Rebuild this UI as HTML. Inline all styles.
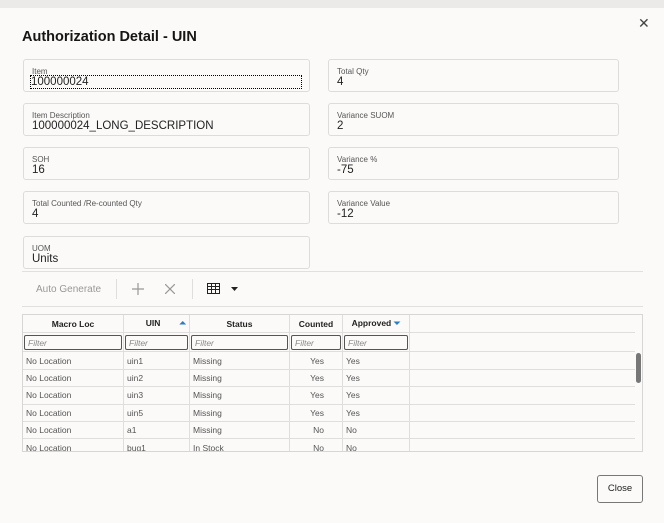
<!DOCTYPE html><html><head><style>
body{margin:0;width:664px;height:523px;background:#fbfaf9;font-family:"Liberation Sans",sans-serif;position:relative;overflow:hidden}
.top{position:absolute;left:0;top:0;width:664px;height:8px;background:#eceae8}
h1{position:absolute;left:22px;top:29px;margin:0;font-size:14.5px;font-weight:bold;color:#161513}
.x{position:absolute;left:638px;top:15px;font-size:14px;color:#444;font-weight:300}
.f{position:absolute;width:287px;height:33px;border:1px solid #dedcda;border-radius:3px;background:#fbfaf9;box-sizing:border-box}
.f .l{position:absolute;left:8px;top:7px;font-size:8px;color:#555}
.f .v{position:absolute;left:8px;top:16px;font-size:11.5px;color:#222}
.hr{position:absolute;left:22px;width:621px;height:1px;background:#e2e0de}
.tb{position:absolute;top:283px;font-size:10px;color:#9a9896}
.grid{position:absolute;left:22px;top:314px;width:621px;height:138px;border:1px solid #d8d6d4;box-sizing:border-box;overflow:hidden}
table{position:absolute;left:0;top:0;width:612px;border-collapse:collapse;font-size:8.5px;color:#555}
td,th{border:1px solid #e0dedc;height:16.4px;padding:0 3px;white-space:nowrap}
tr>*:first-child{border-left:none}
th{height:17px;color:#222;font-weight:bold;font-size:8.5px;background:#fbfaf9;border-top:none}
td.r{text-align:right;padding-right:18px}
td.e,th.e{border-right:none;width:auto}
.fi{border:1px solid #555;border-radius:2px;height:15px;box-sizing:border-box;font-style:italic;color:#888;padding:2px 3px;font-size:8.5px}
</style></head><body>
<div class="top"></div>
<h1>Authorization Detail - UIN</h1>
<div class="x">✕</div>
<div class="f" style="left:23px;top:59px"><span class="l">Item</span><span class="v" style="outline:1px dotted #000;width:270px;left:7px;display:block">100000024</span></div>
<div class="f" style="left:328px;top:59px;width:291px"><span class="l">Total Qty</span><span class="v">4</span></div>
<div class="f" style="left:23px;top:103px"><span class="l">Item Description</span><span class="v">100000024_LONG_DESCRIPTION</span></div>
<div class="f" style="left:328px;top:103px;width:291px"><span class="l">Variance SUOM</span><span class="v">2</span></div>
<div class="f" style="left:23px;top:147px"><span class="l">SOH</span><span class="v">16</span></div>
<div class="f" style="left:328px;top:147px;width:291px"><span class="l">Variance %</span><span class="v">-75</span></div>
<div class="f" style="left:23px;top:191px"><span class="l">Total Counted /Re-counted Qty</span><span class="v">4</span></div>
<div class="f" style="left:328px;top:191px;width:291px"><span class="l">Variance Value</span><span class="v">-12</span></div>
<div class="f" style="left:23px;top:236px"><span class="l">UOM</span><span class="v">Units</span></div>
<div class="hr" style="top:271px"></div>
<div class="tb" style="left:36px;top:284px">Auto Generate</div>
<div style="position:absolute;left:116px;top:279px;width:1px;height:20px;background:#e0dedc"></div>
<svg style="position:absolute;left:132px;top:283px" width="12" height="12"><path d="M6 0V12M0 6H12" stroke="#9a9896" stroke-width="1.2"/></svg>
<svg style="position:absolute;left:165px;top:284px" width="10" height="10"><path d="M0 0L10 10M10 0L0 10" stroke="#9a9896" stroke-width="1.2"/></svg>
<div style="position:absolute;left:192px;top:279px;width:1px;height:20px;background:#e0dedc"></div>
<svg style="position:absolute;left:207px;top:283px" width="34" height="12"><rect x="0.5" y="0.5" width="12" height="10" fill="none" stroke="#222"/><path d="M0 3.5H13M0 6.5H13M4.5 0V11M8.5 0V11" stroke="#222"/><path d="M24 4h7l-3.5 4z" fill="#222"/></svg>
<div class="hr" style="top:306px"></div>
<div class="grid">
<table>
<tr><th style="width:94px">Macro Loc</th><th style="width:59px">UIN <span style="color:#2a7cc7;float:right">⏶</span></th><th style="width:93px">Status</th><th style="width:46px">Counted</th><th style="width:60px">Approved <span style="color:#2a7cc7">⏷</span></th><th class="e"></th></tr>
<tr style="height:18px"><td style="padding:1px"><div class="fi">Filter</div></td><td style="padding:1px"><div class="fi">Filter</div></td><td style="padding:1px"><div class="fi">Filter</div></td><td style="padding:1px"><div class="fi">Filter</div></td><td style="padding:1px"><div class="fi">Filter</div></td><td class="e"></td></tr>
<tr><td>No Location</td><td>uin1</td><td>Missing</td><td class="r">Yes</td><td>Yes</td><td class="e"></td></tr>
<tr><td>No Location</td><td>uin2</td><td>Missing</td><td class="r">Yes</td><td>Yes</td><td class="e"></td></tr>
<tr><td>No Location</td><td>uin3</td><td>Missing</td><td class="r">Yes</td><td>Yes</td><td class="e"></td></tr>
<tr><td>No Location</td><td>uin5</td><td>Missing</td><td class="r">Yes</td><td>Yes</td><td class="e"></td></tr>
<tr><td>No Location</td><td>a1</td><td>Missing</td><td class="r">No</td><td>No</td><td class="e"></td></tr>
<tr><td>No Location</td><td>bug1</td><td>In Stock</td><td class="r">No</td><td>No</td><td class="e"></td></tr>
</table>
</div>
<div style="position:absolute;left:636px;top:353px;width:5px;height:30px;background:#777;border-radius:3px"></div>
<div style="position:absolute;left:597px;top:475px;width:46px;height:28px;border:1px solid #777;border-radius:3px;box-sizing:border-box;font-size:9.5px;color:#222;text-align:center;line-height:26px">Close</div>
</body></html>
